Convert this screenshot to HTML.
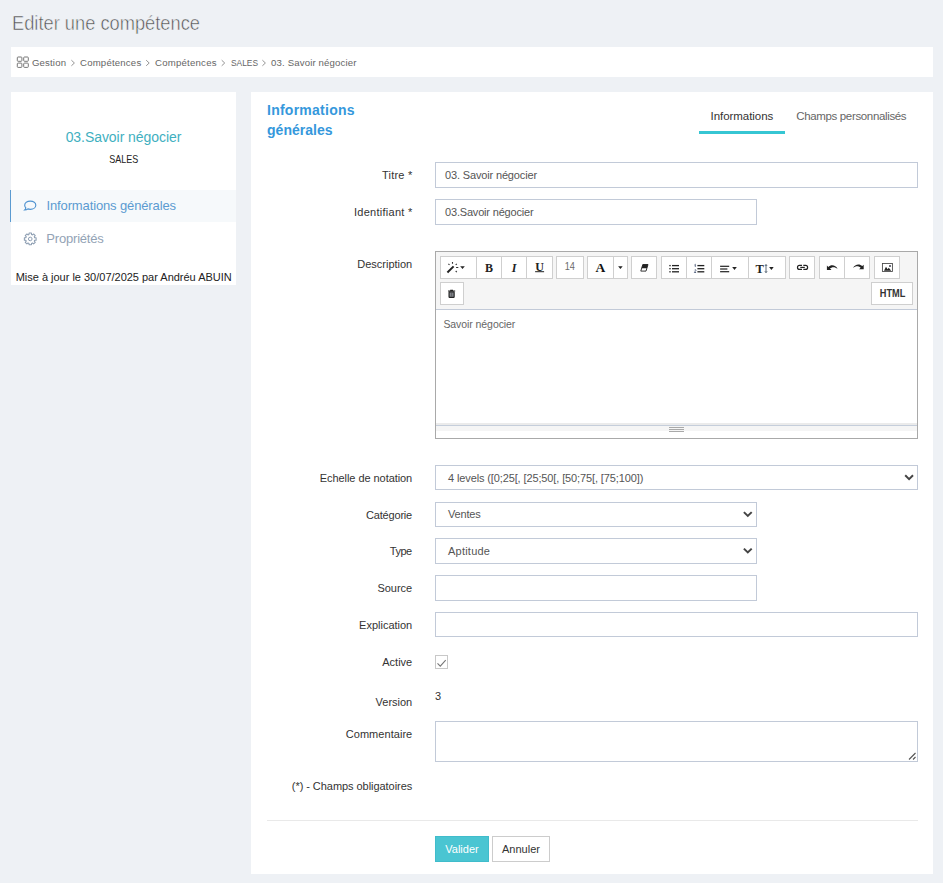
<!DOCTYPE html>
<html lang="fr">
<head>
<meta charset="utf-8">
<title>Editer une compétence</title>
<style>
*{box-sizing:border-box;margin:0;padding:0}
html,body{width:943px;height:883px;overflow:hidden}
body{background:#eef1f5;font-family:"Liberation Sans",sans-serif;font-size:11px;color:#333;position:relative}
.t{position:absolute;white-space:nowrap;z-index:5}
.b{position:absolute}
.crumb{left:11px;top:47px;width:922px;height:30px;background:#fff}
.side{left:11px;top:92px;width:225px;height:193px;background:#fff}
.act{left:11px;top:190px;width:225px;height:32px;background:#f6f9fb}
.actb{left:10px;top:190px;width:1px;height:32px;background:#5b9bd1}
.main{left:251px;top:92px;width:682px;height:782px;background:#fff}
.tabline{left:699px;top:131px;width:86px;height:3px;background:#36c6d3}
.inp{border:1px solid #c2cad8;background:#fff;left:435px}
.hr{left:267px;top:820px;width:651px;height:1px;background:#e9e9e9}
.btn1{left:435px;top:836px;width:54px;height:26px;background:#4ac5d2;border:1px solid #40bccb}
.btn2{left:492px;top:836px;width:58px;height:26px;background:#fff;border:1px solid #ccc}
.ed{left:435px;top:251px;width:483px;height:188px;border:1px solid #a9a9a9;background:#fff}
.tb{left:436px;top:252px;width:481px;height:57px;background:#f5f5f5}
.tbl{left:436px;top:309px;width:481px;height:1px;background:#c2cad8}
.tbtn{position:absolute;top:256px;height:23px;background:#fff;border:1px solid #cfcfcf}
.tbtn.r2{top:282px}
.chk{left:435px;top:655px;width:13px;height:14px;border:1px solid #c8c8c8;background:#fff}
svg{position:absolute;overflow:visible}

</style>
</head>
<body>
<div class="b crumb"></div>
<div class="b side"></div>
<div class="b act"></div>
<div class="b actb"></div>
<div class="b main"></div>
<div class="b tabline"></div>
<div class="b inp" style="top:162px;width:483px;height:26px"></div>
<div class="b inp" style="top:199px;width:322px;height:26px"></div>
<div class="b ed"></div>
<div class="b tb"></div>
<div class="b tbl"></div>
<div class="b inp" style="top:465px;width:483px;height:25px"></div>
<div class="b inp" style="top:502px;width:322px;height:25px"></div>
<div class="b inp" style="top:538px;width:322px;height:26px"></div>
<div class="b inp" style="top:575px;width:322px;height:26px"></div>
<div class="b inp" style="top:612px;width:483px;height:25px"></div>
<div class="b chk"></div>
<div class="b inp" style="top:721px;width:483px;height:41px"></div>
<div class="b hr"></div>
<div class="b btn1"></div>
<div class="b btn2"></div>
<div class="tbtn" style="left:440px;width:37px"></div>
<div class="tbtn" style="left:476px;width:26px"></div>
<div class="tbtn" style="left:501px;width:26px"></div>
<div class="tbtn" style="left:526px;width:27px"></div>
<div class="tbtn" style="left:556px;width:28px"></div>
<div class="tbtn" style="left:587px;width:27px"></div>
<div class="tbtn" style="left:613px;width:15px"></div>
<div class="tbtn" style="left:631px;width:26px"></div>
<div class="tbtn" style="left:661px;width:26px"></div>
<div class="tbtn" style="left:686px;width:26px"></div>
<div class="tbtn" style="left:711px;width:38px"></div>
<div class="tbtn" style="left:748px;width:38px"></div>
<div class="tbtn" style="left:789px;width:26px"></div>
<div class="tbtn" style="left:819px;width:26px"></div>
<div class="tbtn" style="left:844px;width:26px"></div>
<div class="tbtn" style="left:874px;width:26px"></div>
<div class="tbtn r2" style="left:440px;width:24px"></div>
<div class="tbtn r2" style="left:871px;width:42px"></div>
<div class="b" style="left:436px;top:423px;width:481px;height:2px;background:#ebebeb"></div>
<div class="b" style="left:436px;top:425px;width:481px;height:1px;background:#c5cedb"></div>
<div class="b" style="left:436px;top:426px;width:481px;height:5px;background:#f5f5f5"></div>
<div class="b" style="left:669px;top:427px;width:15px;height:1px;background:#a9a9a9"></div>
<div class="b" style="left:669px;top:429px;width:15px;height:1px;background:#a9a9a9"></div>
<div class="b" style="left:669px;top:431px;width:15px;height:1px;background:#a9a9a9"></div>
<svg width="943" height="883" viewBox="0 0 943 883" style="left:0;top:0;z-index:4"><path d="M447.4 272.5L453.6 266.4" stroke="#222" stroke-width="2" stroke-linecap="butt"/>
<path d="M448.4 263.8l1.100 1.100M452.5 262.100v1.700M456.800 263.800l-1.100 1.100M456.100 267.500h2.200M455.700 271l1.100 1.100" stroke="#333" stroke-width="1.100"/>
<path d="M460.2 266.2h4.6l-2.3 2.9z" fill="#222"/>
<rect x="535.1" y="271.2" width="9" height="1" fill="#222"/>
<path d="M618.1 266.2h4.6l-2.3 2.9z" fill="#222"/>
<path d="M642.800 264.500h5.200l-2 6.600h-5.200z" fill="#fff" stroke="#222" stroke-width="0.9"/>
<path d="M642.800 264.500h5.200l-1.150 3.800h-5.200z" fill="#222"/>
<rect x="672" y="264.95000000000005" width="7" height="1.3" fill="#222"/>
<rect x="669.3" y="264.95000000000005" width="1.4" height="1.3" fill="#222"/>
<rect x="672" y="268.05" width="7" height="1.3" fill="#222"/>
<rect x="669.3" y="268.05" width="1.4" height="1.3" fill="#222"/>
<rect x="672" y="271.15000000000003" width="7" height="1.3" fill="#222"/>
<rect x="669.3" y="271.15000000000003" width="1.4" height="1.3" fill="#222"/>
<rect x="697.4" y="264.95000000000005" width="6.9" height="1.3" fill="#222"/>
<rect x="697.4" y="268.05" width="6.9" height="1.3" fill="#222"/>
<rect x="697.4" y="271.15000000000003" width="6.9" height="1.3" fill="#222"/>
<path d="M695.3 264.3v2.6M694.6 264.9l.7-.6" stroke="#346" stroke-width="0.8" fill="none"/>
<path d="M694.5 270.2c.3-.7 1.5-.6 1.4.2c0 .6-1.4 1.300-1.500 2.100h1.700" stroke="#346" stroke-width="0.8" fill="none"/>
<rect x="720.1" y="265.7" width="9.1" height="1.2" fill="#222"/>
<rect x="720.1" y="268.4" width="7.3" height="1.2" fill="#222"/>
<rect x="720.1" y="271.1" width="9.1" height="1.2" fill="#222"/>
<path d="M732.2 267.0h4.6l-2.3 2.9z" fill="#222"/>
<path d="M766 264.6v8M764.9 265.9l1.100-1.300 1.100 1.300M764.900 271.300l1.100 1.300 1.100-1.300" stroke="#345" stroke-width="0.8" fill="none"/>
<path d="M769.1 267.0h4.6l-2.3 2.9z" fill="#222"/>
<path d="M802 265.400h-2.500a2 2 0 0 0 0 4h2.500M803.300 265.400h2.300a2 2 0 0 1 0 4h-2.300" fill="none" stroke="#222" stroke-width="1.2"/>
<rect x="800.3" y="266.8" width="4.5" height="1.2" fill="#222"/>
<path d="M826.9 265.6v4.500h4.600l-1.500-1.500c1.800-1.900 5-2.100 7.600.300c-1.700-3.600-6.400-4.900-9.300-1.900z" fill="#222"/>
<path d="M863.7 264.7v4.500h-4.600l1.500-1.500c-1.800-1.900-5-2.100-7.600.300c1.700-3.600 6.400-4.900 9.300-1.900z" fill="#222"/>
<rect x="882.4" y="263.5" width="10" height="8" fill="#fff" stroke="#444" stroke-width="0.85"/>
<path d="M884 270.700l2-3.900 1.600 2.400 1.200-1.400 2.400 2.900z" fill="#222"/>
<circle cx="890" cy="266" r="0.95" fill="#334"/>
<path d="M448 290.600h7.200v1h-7.200zM450.200 289.800h2.800v.9h-2.800z" fill="#222"/>
<rect x="449.050" y="291.900" width="5.100" height="5.400" rx="0.600" fill="#80838a" stroke="#222" stroke-width="1.150"/>
<path d="M451.600 292.500v4.200" stroke="#555" stroke-width="0.7"/>
<rect x="17.3" y="57" width="4.6" height="4.3" rx="0.8" fill="none" stroke="#777" stroke-width="1"/>
<rect x="23.7" y="57" width="4.6" height="4.3" rx="0.8" fill="none" stroke="#777" stroke-width="1"/>
<rect x="17.3" y="63.1" width="4.6" height="4.3" rx="0.8" fill="none" stroke="#777" stroke-width="1"/>
<rect x="23.7" y="63.1" width="4.6" height="4.3" rx="0.8" fill="none" stroke="#777" stroke-width="1"/>
<path d="M71.4 60.200l3 2.800-3 2.800" stroke="#888" stroke-width="0.9" fill="none"/>
<path d="M146.2 60.200l3 2.800-3 2.800" stroke="#888" stroke-width="0.9" fill="none"/>
<path d="M221.7 60.200l3 2.800-3 2.800" stroke="#888" stroke-width="0.9" fill="none"/>
<path d="M262.4 60.200l3 2.800-3 2.800" stroke="#888" stroke-width="0.9" fill="none"/>
<path d="M30.300 201.400c3.100 0 5.500 1.800 5.500 4.100s-2.400 4.100-5.500 4.100c-.9 0-1.700-.1-2.400-.4c-.8.700-2 1.100-3.200 1.100c.7-.6 1.100-1.400 1.100-2.200c-.7-.7-1.100-1.600-1.100-2.600c0-2.300 2.500-4.100 5.600-4.100z" fill="none" stroke="#4f93d0" stroke-width="1.15" transform="translate(0 -0.3)"/>
<path d="M36.13 237.76L36.13 240.14L34.67 240.22L34.27 241.18L35.25 242.27L33.57 243.95L32.48 242.97L31.52 243.37L31.44 244.83L29.06 244.83L28.98 243.37L28.02 242.97L26.93 243.95L25.25 242.27L26.23 241.18L25.83 240.22L24.37 240.14L24.37 237.76L25.83 237.68L26.23 236.72L25.25 235.63L26.93 233.95L28.02 234.93L28.98 234.53L29.06 233.07L31.44 233.07L31.52 234.53L32.48 234.93L33.57 233.95L35.25 235.63L34.27 236.72L34.67 237.68z" fill="none" stroke="#8d9eb2" stroke-width="1.05" stroke-linejoin="round"/>
<circle cx="30.25" cy="238.95" r="1.8" fill="none" stroke="#8d9eb2" stroke-width="1"/>
<path d="M437.5 663.4l2.800 2.800 5.400-6" stroke="#777" stroke-width="1.1" fill="none"/>
<path d="M909 759.500l6.500-6.500M913 759.500l2.500-2.500" stroke="#555" stroke-width="1.1"/>
<path d="M905.2 475.300l3.900 3.800 3.900-3.800" stroke="#444" stroke-width="2" fill="none"/>
<path d="M743.900 512.100l3.900 3.800 3.900-3.800" stroke="#444" stroke-width="2" fill="none"/>
<path d="M743.900 548.600l3.900 3.800 3.900-3.800" stroke="#444" stroke-width="2" fill="none"/></svg>
<span class="t" style="left:12.30px;top:11.00px;font-size:20px;line-height:24px;color:#505050;-webkit-text-stroke:0.55px #eef1f5;transform:scaleX(0.914);transform-origin:0 50%;">Editer une compétence</span>
<span class="t" style="left:32.00px;top:57.00px;font-size:9.6px;line-height:12px;color:#666;letter-spacing:0.15px;">Gestion</span>
<span class="t" style="left:80.00px;top:57.00px;font-size:9.6px;line-height:12px;color:#666;letter-spacing:0.2px;">Compétences</span>
<span class="t" style="left:155.00px;top:57.00px;font-size:9.6px;line-height:12px;color:#666;letter-spacing:0.23px;">Compétences</span>
<span class="t" style="left:230.50px;top:57.00px;font-size:9.6px;line-height:12px;color:#666;transform:scaleX(0.873);transform-origin:0 50%;">SALES</span>
<span class="t" style="left:271.00px;top:57.00px;font-size:9.6px;line-height:12px;color:#666;letter-spacing:0.16px;">03. Savoir négocier</span>
<span class="t" style="left:65.63px;top:129.00px;font-size:14px;line-height:17px;color:#3fb0bf;letter-spacing:-0.06px;">03.Savoir négocier</span>
<span class="t" style="left:105.77px;top:153.00px;font-size:11px;line-height:13px;color:#222;transform:scaleX(0.818);transform-origin:50% 50%;">SALES</span>
<span class="t" style="left:46.50px;top:198.00px;font-size:13px;line-height:16px;color:#5b9bd1;letter-spacing:-0.13px;">Informations générales</span>
<span class="t" style="left:46.30px;top:231.00px;font-size:13px;line-height:16px;color:#93a3b5;letter-spacing:-0.19px;">Propriétés</span>
<span class="t" style="left:15.70px;top:271.00px;font-size:11px;line-height:13px;color:#222;letter-spacing:-0.01px;">Mise à jour le 30/07/2025 par Andréu ABUIN</span>
<span class="t" style="left:267.00px;top:102.00px;font-size:14px;line-height:17px;color:#3598dc;letter-spacing:0.25px;font-weight:bold;">Informations</span>
<span class="t" style="left:267.00px;top:122.00px;font-size:14px;line-height:17px;color:#3598dc;letter-spacing:0.02px;font-weight:bold;">générales</span>
<span class="t" style="left:710.50px;top:109.00px;font-size:11.5px;line-height:14px;color:#333;letter-spacing:-0.05px;">Informations</span>
<span class="t" style="left:796.25px;top:109.00px;font-size:11.5px;line-height:14px;color:#666;letter-spacing:-0.35px;">Champs personnalisés</span>
<span class="t" style="left:381.99px;top:169.00px;font-size:11px;line-height:13px;color:#333;letter-spacing:0.22px;">Titre *</span>
<span class="t" style="left:353.96px;top:206.00px;font-size:11px;line-height:13px;color:#333;letter-spacing:0.27px;">Identifiant *</span>
<span class="t" style="left:357.22px;top:258.00px;font-size:11px;line-height:13px;color:#333;">Description</span>
<span class="t" style="left:319.75px;top:472.00px;font-size:11px;line-height:13px;color:#333;letter-spacing:-0.06px;">Echelle de notation</span>
<span class="t" style="left:365.99px;top:509.00px;font-size:11px;line-height:13px;color:#333;letter-spacing:-0.18px;">Catégorie</span>
<span class="t" style="left:389.74px;top:545.00px;font-size:11px;line-height:13px;color:#333;letter-spacing:-0.45px;">Type</span>
<span class="t" style="left:377.39px;top:582.00px;font-size:11px;line-height:13px;color:#333;">Source</span>
<span class="t" style="left:359.05px;top:619.00px;font-size:11px;line-height:13px;color:#333;">Explication</span>
<span class="t" style="left:382.28px;top:656.00px;font-size:11px;line-height:13px;color:#333;">Active</span>
<span class="t" style="left:375.55px;top:696.00px;font-size:11px;line-height:13px;color:#333;">Version</span>
<span class="t" style="left:345.72px;top:728.00px;font-size:11px;line-height:13px;color:#333;letter-spacing:0.05px;">Commentaire</span>
<span class="t" style="left:291.79px;top:780.00px;font-size:11px;line-height:13px;color:#333;letter-spacing:-0.05px;">(*) - Champs obligatoires</span>
<span class="t" style="left:445.00px;top:169.00px;font-size:11px;line-height:13px;color:#555;letter-spacing:-0.15px;">03. Savoir négocier</span>
<span class="t" style="left:445.00px;top:206.00px;font-size:11px;line-height:13px;color:#555;letter-spacing:-0.18px;">03.Savoir négocier</span>
<span class="t" style="left:448.00px;top:472.00px;font-size:11px;line-height:13px;color:#555;letter-spacing:-0.12px;">4 levels ([0;25[, [25;50[, [50;75[, [75;100])</span>
<span class="t" style="left:448.00px;top:508.00px;font-size:11px;line-height:13px;color:#555;letter-spacing:-0.18px;">Ventes</span>
<span class="t" style="left:448.00px;top:545.00px;font-size:11px;line-height:13px;color:#555;letter-spacing:0.23px;">Aptitude</span>
<span class="t" style="left:435.00px;top:690.00px;font-size:11px;line-height:13px;color:#333;">3</span>
<span class="t" style="left:443.40px;top:318.00px;font-size:10.5px;line-height:13px;color:#666;letter-spacing:-0.07px;">Savoir négocier</span>
<span class="t" style="left:485.09px;top:261.00px;font-size:12px;line-height:14px;color:#222;font-weight:bold;font-family:'Liberation Serif',serif;">B</span>
<span class="t" style="left:511.86px;top:261.00px;font-size:12px;line-height:14px;color:#222;font-weight:bold;font-family:'Liberation Serif',serif;font-style:italic;">I</span>
<span class="t" style="left:535.26px;top:260.00px;font-size:12px;line-height:14px;color:#222;font-weight:bold;font-family:'Liberation Serif',serif;">U</span>
<span class="t" style="left:564.36px;top:260.00px;font-size:10.5px;line-height:13px;color:#6a6a6a;transform:scaleX(0.873);transform-origin:50% 50%;">14</span>
<span class="t" style="left:595.52px;top:260.00px;font-size:13.5px;line-height:16px;color:#111;font-weight:bold;font-family:'Liberation Serif',serif;">A</span>
<span class="t" style="left:755.53px;top:262.00px;font-size:12.5px;line-height:15px;color:#222;font-weight:bold;font-family:'Liberation Serif',serif;">T</span>
<span class="t" style="left:877.71px;top:287.00px;font-size:10.5px;line-height:13px;color:#333;font-weight:bold;transform:scaleX(0.878);transform-origin:50% 50%;">HTML</span>
<span class="t" style="left:445.28px;top:843.00px;font-size:11px;line-height:13px;color:#fff;">Valider</span>
<span class="t" style="left:502.04px;top:843.00px;font-size:11px;line-height:13px;color:#333;">Annuler</span>
</body>
</html>
